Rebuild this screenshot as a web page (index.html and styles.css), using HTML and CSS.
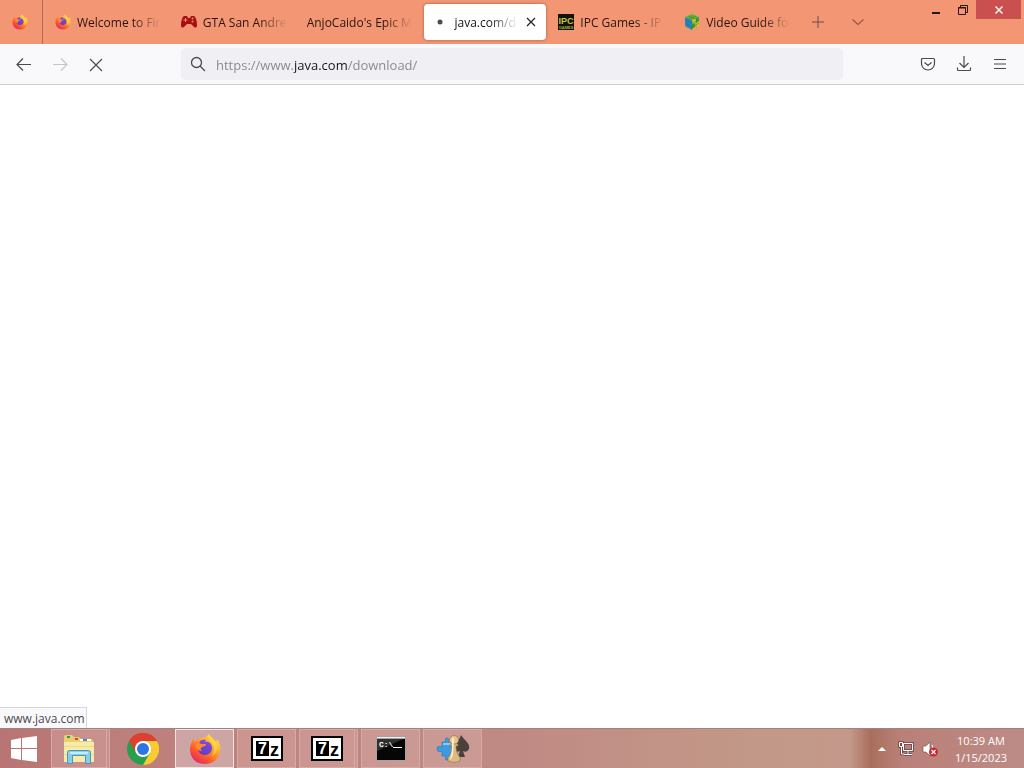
FILE: index.html
```html
<!DOCTYPE html>
<html lang="en">
<head>
    <meta charset="UTF-8">
    <meta name="viewport" content="width=device-width, initial-scale=1.0">
    <title>java.com/download</title>
    <link rel="stylesheet" href="styles.css">
</head>
<body>
    <!-- Shared logo shapes -->
    <svg class="defs" width="0" height="0" aria-hidden="true">
        <defs>
            <linearGradient id="fx-body" x1="0.85" y1="0.1" x2="0.2" y2="0.95">
                <stop offset="0" stop-color="#ffe14a"/>
                <stop offset="0.35" stop-color="#ffa52a"/>
                <stop offset="0.7" stop-color="#ff5a2c"/>
                <stop offset="1" stop-color="#e5266a"/>
            </linearGradient>
            <linearGradient id="fx-globe" x1="0.7" y1="0" x2="0.3" y2="1">
                <stop offset="0" stop-color="#8a4be0"/>
                <stop offset="1" stop-color="#5a3fc4"/>
            </linearGradient>
            <symbol id="firefox" viewBox="0 0 32 32">
                <path fill="url(#fx-body)" d="M20 1c1 3 5 5 7 8 1-1 1-2 1-3 3 4 4 8 3 12-1 8-7 13-15 13C7 31 1 25 1 16c0-4 2-8 4-11 0 2 0 3 1 4 2-3 4-4 7-4 2 0 3-1 4-1 1-1 2-2 3-3z"/>
                <path fill="url(#fx-globe)" d="M10 10c1-3 4-4 7-3l-1 2c4-1 7 2 7 6 0 4-3 7-7 7s-7-3-7-6c0-2 0-4 1-6z"/>
                <path fill="#ff8a2a" d="M6 10c2-1 4-1 6 1h5c0 2-2 2-4 3-2 2-1 3 0 4-4 0-6-3-7-8z"/>
                <path fill="#ffd543" d="M20 1c-1 4 1 6 3 9 3 4 3 9 0 13 5-3 7-9 4-14-2-3-6-5-7-8z"/>
            </symbol>
            <symbol id="seven-zip" viewBox="0 0 32 25">
                <rect width="32" height="25" fill="#000"/>
                <rect x="2" y="2" width="28" height="21" fill="#fff"/>
                <rect x="5" y="5" width="13" height="15" fill="#000"/>
                <text class="zip-seven" x="7" y="18">7</text>
                <text class="zip-z" x="19" y="20">z</text>
            </symbol>
        </defs>
    </svg>

    <div class="desktop">
        <header class="titlebar">
            <button class="pinned-tab" aria-label="Firefox"><svg width="16" height="16"><use href="#firefox"/></svg></button>
            <div class="tabs">
                <button class="tab">
                    <svg width="16" height="16"><use href="#firefox"/></svg>
                    <span class="tab-title">Welcome to Fir</span>
                </button>
                <button class="tab">
                    <svg width="16" height="16" viewBox="0 0 16 16">
                        <path fill="#a80f12" d="M3 2h3l1 2h2l1-2h3c2 1 3 6 3 9 0 3-2 3-3 2l-3-3H6l-3 3c-1 1-3 1-3-2 0-3 1-8 3-9z"/>
                        <path stroke="#f0906c" d="M4.500 4v4M2.500 6h4" fill="none"/>
                        <circle cx="11.500" cy="4.500" r="1" fill="#f0906c"/><circle cx="11.500" cy="7.500" r="1" fill="#f0906c"/>
                    </svg>
                    <span class="tab-title">GTA San Andre</span>
                </button>
                <button class="tab"><span class="tab-title">AnjoCaido's Epic M</span></button>
                <div class="tab active">
                    <svg width="16" height="16" viewBox="0 0 16 16"><circle cx="8" cy="8" r="2.500" fill="#4a4a50"/></svg>
                    <span class="tab-title">java.com/do</span>
                    <button class="tab-close" aria-label="Close tab">
                        <svg width="10" height="10" viewBox="0 0 10 10"><path d="M1 1l8 8M9 1l-8 8" stroke="#222" stroke-width="1.200"/></svg>
                    </button>
                </div>
                <button class="tab">
                    <svg width="16" height="16" viewBox="0 0 16 16">
                        <rect width="16" height="16" fill="#10140c"/>
                        <text class="ipc-big" x="8" y="10" text-anchor="middle">IPC</text>
                        <text class="ipc-small" x="8" y="15" text-anchor="middle">GAMES</text>
                    </svg>
                    <span class="tab-title">IPC Games - IP</span>
                </button>
                <button class="tab">
                    <svg width="16" height="16" viewBox="0 0 16 16">
                        <path fill="#2488c8" d="M1 3l7 3v10l-7-4z"/>
                        <path fill="#d9c52c" d="M8 6l7-3v9l-7 4z"/>
                        <path fill="#5fb634" d="M1 3l7-3 7 3-7 3z"/>
                        <path fill="#35a03c" d="M12 4l3-1v4l-3 2zM8 10l3-1v4l-3 2z"/>
                        <path fill="none" stroke="#25703a" stroke-width=".4" d="M1 6l7 3 7-3M1 9l7 4 7-4M4 4v10M12 4v10M8 6v10M4 2l7 3M12 2L5 5"/>
                    </svg>
                    <span class="tab-title">Video Guide for</span>
                </button>
            </div>
            <button class="strip-button" aria-label="New tab">
                <svg width="14" height="14" viewBox="0 0 14 14"><path d="M7 1v12M1 7h12" stroke="#704a50"/></svg>
            </button>
            <button class="strip-button" aria-label="List all tabs">
                <svg width="14" height="14" viewBox="0 0 14 14"><path d="M1.500 4.500L7 9.500l5.500-5" fill="none" stroke="#9a5444" stroke-width="1.200"/></svg>
            </button>
            <div class="window-controls">
                <button aria-label="Minimize"><svg width="12" height="12" viewBox="0 0 12 12"><path d="M2 9h8" stroke="#2b1410" stroke-width="2"/></svg></button>
                <button aria-label="Restore"><svg width="12" height="12" viewBox="0 0 12 12"><path d="M1.500 3.500h7v7h-7zM3.500 3.500v-2h7v7h-2" fill="none" stroke="#2b1410"/><path d="M1 4h8" stroke="#2b1410"/></svg></button>
                <button class="close" aria-label="Close"><svg width="10" height="10" viewBox="0 0 10 10"><path d="M1.500 1.500l7 7M8.500 1.500l-7 7" stroke="#fff0e8" stroke-width="1.600"/></svg></button>
            </div>
        </header>

        <nav class="toolbar">
            <button aria-label="Back"><svg width="16" height="16" viewBox="0 0 16 16"><path d="M15 8.500H1.500M7 2.500L1 8.500l6 6" fill="none" stroke="#4a4a50" stroke-width="1.200"/></svg></button>
            <button aria-label="Forward" disabled><svg width="16" height="16" viewBox="0 0 16 16"><path d="M1 8.500h13.500M9 2.500l6 6-6 6" fill="none" stroke="#c6c6ca" stroke-width="1.200"/></svg></button>
            <button aria-label="Stop"><svg width="16" height="16" viewBox="0 0 16 16"><path d="M2 3l12 12M14 3L2 15" stroke="#4a4a50" stroke-width="1.200"/></svg></button>
            <div class="urlbar">
                <label for="url"><svg width="16" height="16" viewBox="0 0 16 16" role="img" aria-label="Address"><circle cx="6.500" cy="6.500" r="5" fill="none" stroke="#4a4a50" stroke-width="1.300"/><path d="M10 10l5 5" stroke="#4a4a50" stroke-width="1.300"/></svg></label>
                <input id="url" type="text" value="https://www.java.com/download/" spellcheck="false">
            </div>
            <div class="toolbar-end">
                <button aria-label="Save to Pocket"><svg width="16" height="16" viewBox="0 0 16 16"><path d="M2.500 2.500h11q1 0 1 1V7.500a6.500 6.500 0 0 1-13 0V3.500q0-1 1-1zM4.500 6.500L8 9.500l3.500-3" fill="none" stroke="#4a4a50" stroke-width="1.200"/></svg></button>
                <button aria-label="Downloads"><svg width="16" height="16" viewBox="0 0 16 16"><path d="M8 0v11M3.500 7L8 11.500 12.500 7M1.500 11.500v2q0 1 1 1h11q1 0 1-1v-2" fill="none" stroke="#4a4a50" stroke-width="1.200"/></svg></button>
                <button aria-label="Menu"><svg width="16" height="16" viewBox="0 0 16 16"><path d="M2 3.500h12M2 8h12M2 12.500h12" stroke="#4a4a50" stroke-width="1.200"/></svg></button>
            </div>
        </nav>

        <main class="page">
            <div class="status">www.java.com</div>
        </main>

        <footer class="taskbar">
            <button class="start" aria-label="Start">
                <svg width="28" height="26" viewBox="0 0 28 26"><path fill="#fff" d="M1 4l10-2v10H1zM12 2l15-2v12H12zM1 13h10v11L1 22zM12 13h15v13l-15-2z"/></svg>
            </button>
            <div class="apps">
                <button class="app open stacked" aria-label="File Explorer">
                    <svg width="32" height="30" viewBox="0 0 32 30">
                        <path fill="#e9cf72" d="M1 3q0-2 2-2h6l2 2h5l2 2h9q3 0 3 3v19H1z"/>
                        <path fill="#2f9b46" d="M4 2h3v2H4z"/><path fill="#d04a32" d="M12 4h3v2h-3z"/><path fill="#fff" d="M17 5h11v2H17z"/><path fill="#3c8ed0" d="M20 5h4v2h-4z"/>
                        <path fill="#f8eba7" d="M1 8h30v20H1z"/>
                        <path fill="#eed98a" d="M1 12h30v1H1zM1 20h30v1H1z"/>
                        <path fill="#88cdea" stroke="#4799c4" d="M4.500 29.500v-11q0-2 2-2h19q2 0 2 2v11h-5v-8h-13v8z"/>
                        <path fill="#c6ecf8" d="M7 18h18v2H7z"/>
                    </svg>
                </button>
                <button class="app" aria-label="Chrome">
                    <svg width="32" height="32" viewBox="0 0 32 32">
                        <circle cx="16" cy="16" r="16" fill="#2a9f4b"/>
                        <path fill="#f9cb33" d="M16 8h13.900A16 16 0 0 1 16 32l7-12z"/>
                        <path fill="#dd3f32" d="M2.100 8A16 16 0 0 1 29.900 8H16a8 8 0 0 0-7 12z"/>
                        <circle cx="16" cy="16" r="8" fill="#fff"/><circle cx="16" cy="16" r="6" fill="#2d74e4"/>
                    </svg>
                </button>
                <button class="app open current" aria-label="Firefox"><svg width="32" height="32"><use href="#firefox"/></svg></button>
                <button class="app open" aria-label="7-Zip"><svg width="32" height="25"><use href="#seven-zip"/></svg></button>
                <button class="app open stacked" aria-label="7-Zip windows"><svg width="32" height="25"><use href="#seven-zip"/></svg></button>
                <button class="app open" aria-label="Command Prompt">
                    <svg width="30" height="25" viewBox="0 0 30 25">
                        <rect width="30" height="25" fill="#a9a2a2"/><rect x="1" y="3" width="28" height="21" fill="#060606"/>
                        <path fill="#eee" d="M1 1h28v1H1z"/><path fill="#303030" d="M1 3h26L1 15z"/>
                        <text class="prompt" x="3" y="11">C:\_</text>
                        <path stroke="#fff" d="M17 11.500h9"/>
                    </svg>
                </button>
                <button class="app open" aria-label="Games">
                    <svg width="34" height="30" viewBox="0 0 34 30">
                        <path fill="#4a403c" d="M25 1q2 3 5 6 4 4 3 8-2 4-6 2l2 6h-7l2-6q-5 2-6-3 0-4 4-7 2-3 3-6z"/>
                        <path fill="#3f9be0" stroke="#2a74b4" stroke-width=".6" d="M6 8h4q-2-4 1-4t1 4h5v14h-5q2 4-1 4t-1-4H6v-5q-5 2-5-2t5-2z"/>
                        <path fill="#8accf2" d="M7 9h8v2H7z"/>
                        <circle cx="18" cy="6" r="4.500" fill="#e4c690" stroke="#8a6a40" stroke-width=".6"/>
                        <path fill="#dcbc84" stroke="#8a6a40" stroke-width=".6" d="M14 10h8v2h-2q0 7 3 10 2 2 1 5-6 3-12 0-1-3 1-5 3-3 3-10h-2z"/>
                        <path fill="#fff0cc" d="M16 4q2-1 2 2l-1 14q-1 5-3 6 2-8 2-14z"/>
                    </svg>
                </button>
            </div>
            <div class="tray">
                <button aria-label="Show hidden icons"><svg width="8" height="16" viewBox="0 0 8 16"><path fill="#fff" d="M0 10l4-4 4 4z"/></svg></button>
                <button aria-label="Network">
                    <svg width="16" height="16" viewBox="0 0 16 16"><path d="M5.500 2.500h9v7h-9zM10 10v4M6 13.500h8M1.500 1.500h3v4h-3zM3.500 6v7h3" fill="none" stroke="#6b4040" stroke-width="2.500"/><path d="M5.500 2.500h9v7h-9zM10 10v4M6 13.500h8M1.500 1.500h3v4h-3zM3.500 6v7h3" fill="none" stroke="#fff"/></svg>
                </button>
                <button aria-label="Volume muted">
                    <svg width="16" height="16" viewBox="0 0 16 16"><path fill="#fff" stroke="#704848" stroke-width=".6" d="M1 5h3l4-4v14l-4-4H1z"/><path d="M10 4q2 3 0 7" fill="none" stroke="#fff"/><circle cx="11.500" cy="11" r="4.500" fill="#d1272f"/><path d="M9.500 9l4 4M13.500 9l-4 4" stroke="#fff" stroke-width="1.300"/></svg>
                </button>
                <div class="clock"><div>10:39 AM</div><div>1/15/2023</div></div>
            </div>
        </footer>
    </div>
</body>
</html>
```
FILE: styles.css
```css
html, body {
    margin: 0;
    height: 100%;
    overflow: hidden;
    font-family: "Open Sans", "Noto Sans", sans-serif;
    font-size: 12px;
}
* {
    box-sizing: border-box;
}
button {
    border: none;
    padding: 0;
    margin: 0;
    background: none;
    font: inherit;
    color: inherit;
    display: flex;
    flex-shrink: 0;
    align-items: center;
    justify-content: center;
}
svg {
    display: block;
    flex: none;
}
.defs {
    position: absolute;
}
.desktop {
    display: flex;
    flex-direction: column;
    height: 100vh;
}

/* Tab strip */
.titlebar {
    display: flex;
    height: 44px;
    background: #f29674;
    color: #2b1410;
}
.pinned-tab {
    width: 43px;
    padding-right: 2px;
    border-right: 1px solid #b46a54;
}
.tabs {
    display: flex;
    flex: 1;
    gap: 4px;
    min-width: 0;
    padding: 4px 0 4px 4px;
}
.tab {
    display: flex;
    flex: 1;
    align-items: center;
    justify-content: flex-start;
    gap: 6px;
    min-width: 0;
    padding: 0 8px;
    border-radius: 4px;
    text-align: left;
}
.tab.active {
    background: #fff;
    color: #15141a;
    box-shadow: 0 0 3px rgba(90, 30, 10, 0.5);
}
.tab-title {
    flex: 1;
    min-width: 0;
    white-space: nowrap;
    mask-image: linear-gradient(to left, transparent, #000 28px);
}
.tab-close {
    width: 14px;
    height: 20px;
}
.strip-button {
    width: 40px;
}
.window-controls {
    display: flex;
    flex-shrink: 0;
    align-items: flex-start;
    padding: 0 3px 0 44px;
}
.window-controls button {
    width: 27px;
    height: 19px;
}
.window-controls .close {
    width: 45px;
    background: #c9504f;
}

/* Navigation bar */
.toolbar {
    display: flex;
    align-items: center;
    height: 41px;
    padding: 0 6px;
    background: #f9f9fb;
    border-bottom: 1px solid #ccccd0;
}
.toolbar button {
    width: 36px;
    height: 32px;
}
.urlbar {
    display: flex;
    flex: 1;
    align-items: center;
    gap: 10px;
    height: 32px;
    margin: 0 67px;
    padding-left: 9px;
    border-radius: 4px;
    background: #f0f0f4;
}
.urlbar input {
    flex: 1;
    min-width: 0;
    padding: 2px 0 0;
    border: none;
    outline: none;
    font: inherit;
    font-size: 13px;
    color: transparent;
    /* The host name is darker than the rest of the address */
    background: linear-gradient(to right, #85858c 78px, #15141a 78px, #15141a 131px, #85858c 131px);
    background-clip: text;
    -webkit-background-clip: text;
}
.toolbar-end {
    display: flex;
}

/* Page area */
.page {
    display: flex;
    flex: 1;
    align-items: flex-end;
    background: #fff;
}
.status {
    padding: 2px 1px 0 4px;
    border: 1px solid #d8d8dc;
    border-width: 1px 1px 0 0;
    background: #f9f9fb;
    color: #4a4a50;
    line-height: 18px;
}

/* Taskbar */
.taskbar {
    display: flex;
    height: 40px;
    border-top: 1px solid #a58080;
    background: linear-gradient(to right, #b87474, #bd7f7b 12%, #c08a84 50%, #c29988 75%, #c4988a 83%, #a96f5c 85%, #b98078 88%, #bd8b87);
    color: #fff;
}
.start {
    width: 48px;
}
.apps {
    display: flex;
    flex: 1;
    gap: 3px;
    padding-left: 3px;
}
.app {
    width: 59px;
    border: 1px solid transparent;
}
.app.open {
    border-color: #d8aaa6;
    background: rgba(255, 225, 220, 0.2);
}
.app.open.current {
    border: 1px solid #f3e4e2;
    background: #cda5a5;
}
.app.stacked {
    border-right: 4px double #d8aaa6;
}
.tray {
    display: flex;
    align-items: center;
    gap: 8px;
    padding-right: 17px;
}
.tray button {
    width: 16px;
    height: 32px;
}
.clock {
    margin-left: 9px;
    text-align: center;
    font-size: 11px;
    line-height: 17px;
}

/* Lettering inside the icons */
.zip-seven {
    font: bold 16px "Liberation Sans", sans-serif;
    fill: #fff;
}
.zip-z {
    font: bold 18px "Liberation Sans", sans-serif;
    fill: #000;
}
.ipc-big {
    font: bold 9px "Liberation Sans", sans-serif;
    fill: #c9c23e;
}
.ipc-small {
    font: bold 4px "Liberation Sans", sans-serif;
    fill: #a4a84a;
}
.prompt {
    font: bold 8px "Liberation Mono", monospace;
    fill: #fff;
}
```
